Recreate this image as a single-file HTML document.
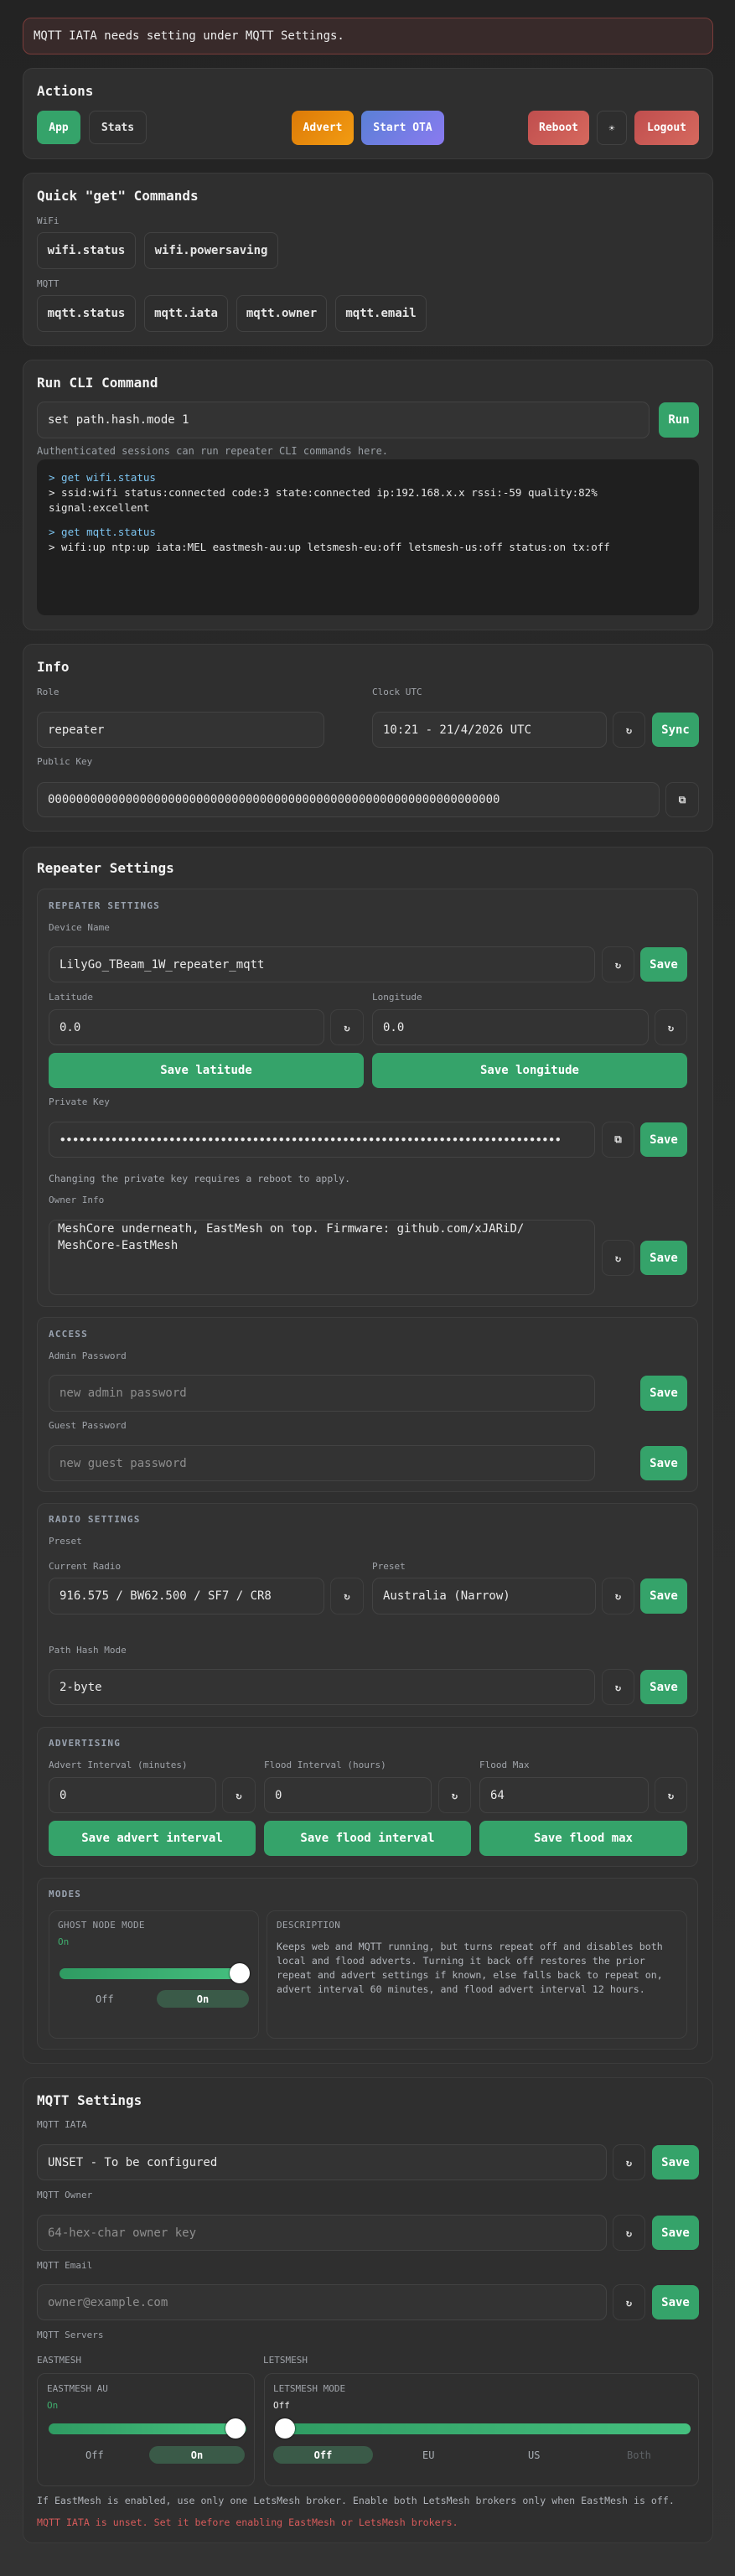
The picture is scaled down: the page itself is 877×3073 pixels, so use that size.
<!DOCTYPE html>
<html><head><meta charset="utf-8"><style>
*{box-sizing:border-box;margin:0;padding:0}
html,body{width:877px;height:3073px}
body{background:linear-gradient(#232323,#2c2c2c 50%,#333333);font-family:"DejaVu Sans Mono","Liberation Mono",monospace;color:#e8e8e8;position:relative;overflow:hidden}
div,span{position:absolute}
.c{left:27px;width:824px;background:#2f2f2f;border:1px solid #3b3b3b;border-radius:12px}
.sb{left:44px;width:789px;background:#323232;border:1px solid #3e3e3e;border-radius:10px}
.h{left:44px;font-size:16px;font-weight:bold;color:#f2f2f2;white-space:nowrap;line-height:20px}
.l{font-size:11px;color:#a0a4aa;white-space:nowrap;line-height:14px}
.sh{left:58px;font-size:11px;font-weight:bold;letter-spacing:1.2px;color:#9aa3b0;line-height:14px}
.in{background:#333;border:1px solid #434343;border-radius:9px;display:flex;align-items:center;padding-left:12px;font-size:14px;color:#eaeaea;white-space:nowrap;overflow:hidden}
.ph{color:#8e8e8e}
.b{background:#35a36a;border-radius:8px;display:flex;align-items:center;justify-content:center;font-size:14px;font-weight:bold;color:#fff;white-space:nowrap}
.ib{border:1px solid #3f3f3f;border-radius:9px;display:flex;align-items:center;justify-content:center;font-size:12px;font-weight:bold;color:#ddd}
.q{border:1px solid #424242;border-radius:8px;background:#2e2e2e;display:flex;align-items:center;justify-content:center;font-size:14px;font-weight:bold;color:#e6e6e6}
.t{font-size:12px;color:#b8bcc2;white-space:nowrap;line-height:17px}
.trk{height:13px;border-radius:7px;background:linear-gradient(90deg,#2f9b62,#45c07f)}
.th{width:24px;height:24px;border-radius:50%;background:#fff;box-shadow:0 0 2px #000}
.pill{border-radius:11px;background:#3a5a48;height:21px;display:flex;align-items:center;justify-content:center;font-size:12px;font-weight:bold;color:#fff}
.seg{font-size:12px;color:#aab0b6;height:21px;display:flex;align-items:center}
</style></head><body>

<div style="left:27px;top:21px;width:824px;height:44px;background:#382a2a;border:1px solid #7a3c3a;border-radius:10px"></div>
<div style="left:40px;top:34px;font-size:14px;line-height:18px;color:#eee;white-space:nowrap">MQTT IATA needs setting under MQTT Settings.</div>

<div class="c" style="top:81px;height:109px"></div>
<div class="h" style="top:99px">Actions</div>
<div class="b" style="left:44px;top:132px;width:52px;height:40px;font-size:13px">App</div>
<div class="q" style="left:106px;top:132px;width:69px;height:40px;font-size:13px">Stats</div>
<div class="b" style="left:348px;top:132px;width:74px;height:41px;font-size:13px;background:linear-gradient(135deg,#dc7a08,#f39c12)">Advert</div>
<div class="b" style="left:431px;top:132px;width:99px;height:41px;font-size:13px;background:linear-gradient(135deg,#5a80d6,#8a7af0)">Start OTA</div>
<div class="b" style="left:630px;top:132px;width:73px;height:41px;font-size:13px;background:linear-gradient(135deg,#c04e4e,#d6695e)">Reboot</div>
<div class="q" style="left:712px;top:132px;width:36px;height:41px;font-size:12px">☀</div>
<div class="b" style="left:757px;top:132px;width:77px;height:41px;font-size:13px;background:linear-gradient(135deg,#c04e4e,#d6695e)">Logout</div>

<div class="c" style="top:206px;height:207px"></div>
<div class="h" style="top:224px">Quick "get" Commands</div>
<div class="l" style="left:44px;top:257px">WiFi</div>
<div class="q" style="left:44px;top:277px;width:118px;height:44px">wifi.status</div>
<div class="q" style="left:172px;top:277px;width:160px;height:44px">wifi.powersaving</div>
<div class="l" style="left:44px;top:332px">MQTT</div>
<div class="q" style="left:44px;top:352px;width:118px;height:44px">mqtt.status</div>
<div class="q" style="left:172px;top:352px;width:100px;height:44px">mqtt.iata</div>
<div class="q" style="left:282px;top:352px;width:108px;height:44px">mqtt.owner</div>
<div class="q" style="left:400px;top:352px;width:109px;height:44px">mqtt.email</div>

<div class="c" style="top:429px;height:323px"></div>
<div class="h" style="top:447px">Run CLI Command</div>
<div class="in" style="left:44px;top:479px;width:731px;height:44px">set path.hash.mode 1</div>
<div class="b" style="left:786px;top:480px;width:48px;height:42px">Run</div>
<div class="t" style="left:44px;top:530px;color:#9aa0a6">Authenticated sessions can run repeater CLI commands here.</div>
<div style="left:44px;top:548px;width:790px;height:186px;background:#1f1f1f;border-radius:10px"></div>
<div style="left:58px;top:561px;font-size:12.5px;line-height:18px;white-space:nowrap;color:#e6e6e6"><span style="position:static;color:#7cc4f0">&gt; get wifi.status</span><br>&gt; ssid:wifi status:connected code:3 state:connected ip:192.168.x.x rssi:-59 quality:82%<br>signal:excellent</div>
<div style="left:58px;top:626px;font-size:12.5px;line-height:18px;white-space:nowrap;color:#e6e6e6"><span style="position:static;color:#7cc4f0">&gt; get mqtt.status</span><br>&gt; wifi:up ntp:up iata:MEL eastmesh-au:up letsmesh-eu:off letsmesh-us:off status:on tx:off</div>

<div class="c" style="top:768px;height:224px"></div>
<div class="h" style="top:786px">Info</div>
<div class="l" style="left:44px;top:819px">Role</div>
<div class="l" style="left:444px;top:819px">Clock UTC</div>
<div class="in" style="left:44px;top:849px;width:343px;height:43px">repeater</div>
<div class="in" style="left:444px;top:849px;width:280px;height:43px">10:21 - 21/4/2026 UTC</div>
<div class="ib" style="left:731px;top:849px;width:39px;height:43px">↻</div>
<div class="b" style="left:778px;top:850px;width:56px;height:41px">Sync</div>
<div class="l" style="left:44px;top:902px">Public Key</div>
<div class="in" style="left:44px;top:933px;width:743px;height:42px">0000000000000000000000000000000000000000000000000000000000000000</div>
<div class="ib" style="left:794px;top:933px;width:40px;height:42px">⧉</div>

<div class="c" style="top:1010px;height:1452px"></div>
<div class="h" style="top:1026px">Repeater Settings</div>

<div class="sb" style="top:1060px;height:499px"></div>
<div class="sh" style="top:1074px">REPEATER SETTINGS</div>
<div class="l" style="left:58px;top:1100px">Device Name</div>
<div class="in" style="left:58px;top:1129px;width:652px;height:43px">LilyGo_TBeam_1W_repeater_mqtt</div>
<div class="ib" style="left:718px;top:1129px;width:39px;height:43px">↻</div>
<div class="b" style="left:764px;top:1130px;width:56px;height:41px">Save</div>
<div class="l" style="left:58px;top:1183px">Latitude</div>
<div class="l" style="left:444px;top:1183px">Longitude</div>
<div class="in" style="left:58px;top:1204px;width:329px;height:43px">0.0</div>
<div class="ib" style="left:394px;top:1204px;width:40px;height:43px">↻</div>
<div class="in" style="left:444px;top:1204px;width:330px;height:43px">0.0</div>
<div class="ib" style="left:781px;top:1204px;width:39px;height:43px">↻</div>
<div class="b" style="left:58px;top:1256px;width:376px;height:42px">Save latitude</div>
<div class="b" style="left:444px;top:1256px;width:376px;height:42px">Save longitude</div>
<div class="l" style="left:58px;top:1308px">Private Key</div>
<div class="in" style="left:58px;top:1338px;width:652px;height:43px;font-size:12.5px;letter-spacing:0.15px;font-weight:bold">••••••••••••••••••••••••••••••••••••••••••••••••••••••••••••••••••••••••••••••</div>
<div class="ib" style="left:718px;top:1338px;width:39px;height:43px">⧉</div>
<div class="b" style="left:764px;top:1339px;width:56px;height:41px">Save</div>
<div class="t" style="left:58px;top:1398px;font-size:11.5px;color:#a8acb2">Changing the private key requires a reboot to apply.</div>
<div class="l" style="left:58px;top:1425px">Owner Info</div>
<div style="left:58px;top:1455px;width:652px;height:90px;background:#333;border:1px solid #434343;border-radius:9px"></div>
<div style="left:69px;top:1456px;font-size:14px;line-height:20px;white-space:nowrap;color:#eaeaea">MeshCore underneath, EastMesh on top. Firmware: github.com/xJARiD/<br>MeshCore-EastMesh</div>
<div class="ib" style="left:718px;top:1479px;width:39px;height:43px">↻</div>
<div class="b" style="left:764px;top:1480px;width:56px;height:41px">Save</div>

<div class="sb" style="top:1571px;height:209px"></div>
<div class="sh" style="top:1585px">ACCESS</div>
<div class="l" style="left:58px;top:1611px">Admin Password</div>
<div class="in" style="left:58px;top:1640px;width:652px;height:44px"><span class="ph" style="position:static">new admin password</span></div>
<div class="b" style="left:764px;top:1641px;width:56px;height:42px">Save</div>
<div class="l" style="left:58px;top:1694px">Guest Password</div>
<div class="in" style="left:58px;top:1724px;width:652px;height:43px"><span class="ph" style="position:static">new guest password</span></div>
<div class="b" style="left:764px;top:1725px;width:56px;height:41px">Save</div>

<div class="sb" style="top:1793px;height:255px"></div>
<div class="sh" style="top:1806px">RADIO SETTINGS</div>
<div class="l" style="left:58px;top:1832px">Preset</div>
<div class="l" style="left:58px;top:1862px">Current Radio</div>
<div class="l" style="left:444px;top:1862px">Preset</div>
<div class="in" style="left:58px;top:1882px;width:329px;height:44px">916.575 / BW62.500 / SF7 / CR8</div>
<div class="ib" style="left:394px;top:1882px;width:40px;height:44px">↻</div>
<div class="in" style="left:444px;top:1882px;width:267px;height:44px">Australia (Narrow)</div>
<div class="ib" style="left:718px;top:1882px;width:39px;height:44px">↻</div>
<div class="b" style="left:764px;top:1883px;width:56px;height:42px">Save</div>
<div class="l" style="left:58px;top:1962px">Path Hash Mode</div>
<div class="in" style="left:58px;top:1991px;width:652px;height:43px">2-byte</div>
<div class="ib" style="left:718px;top:1991px;width:39px;height:43px">↻</div>
<div class="b" style="left:764px;top:1992px;width:56px;height:41px">Save</div>

<div class="sb" style="top:2060px;height:167px"></div>
<div class="sh" style="top:2073px">ADVERTISING</div>
<div class="l" style="left:58px;top:2099px">Advert Interval (minutes)</div>
<div class="l" style="left:315px;top:2099px">Flood Interval (hours)</div>
<div class="l" style="left:572px;top:2099px">Flood Max</div>
<div class="in" style="left:58px;top:2120px;width:200px;height:43px">0</div>
<div class="ib" style="left:265px;top:2120px;width:40px;height:43px">↻</div>
<div class="in" style="left:315px;top:2120px;width:200px;height:43px">0</div>
<div class="ib" style="left:523px;top:2120px;width:39px;height:43px">↻</div>
<div class="in" style="left:572px;top:2120px;width:202px;height:43px">64</div>
<div class="ib" style="left:781px;top:2120px;width:39px;height:43px">↻</div>
<div class="b" style="left:58px;top:2172px;width:247px;height:42px">Save advert interval</div>
<div class="b" style="left:315px;top:2172px;width:247px;height:42px">Save flood interval</div>
<div class="b" style="left:572px;top:2172px;width:248px;height:42px">Save flood max</div>

<div class="sb" style="top:2240px;height:205px"></div>
<div class="sh" style="top:2253px">MODES</div>
<div style="left:58px;top:2279px;width:251px;height:153px;border:1px solid #3f3f3f;border-radius:10px"></div>
<div class="l" style="left:69px;top:2290px;letter-spacing:0.3px">GHOST NODE MODE</div>
<div class="l" style="left:69px;top:2310px;color:#3fae6e">On</div>
<div class="trk" style="left:71px;top:2348px;width:222px"></div>
<div class="th" style="left:274px;top:2342px"></div>
<div class="seg" style="left:114px;top:2374px">Off</div>
<div class="pill" style="left:187px;top:2374px;width:110px">On</div>
<div style="left:318px;top:2279px;width:502px;height:153px;border:1px solid #3f3f3f;border-radius:10px"></div>
<div class="l" style="left:330px;top:2290px;letter-spacing:0.3px">DESCRIPTION</div>
<div style="left:330px;top:2314px;font-size:11.6px;line-height:17px;color:#b4b8be;white-space:nowrap">Keeps web and MQTT running, but turns repeat off and disables both<br>local and flood adverts. Turning it back off restores the prior<br>repeat and advert settings if known, else falls back to repeat on,<br>advert interval 60 minutes, and flood advert interval 12 hours.</div>

<div class="c" style="top:2478px;height:556px"></div>
<div class="h" style="top:2496px">MQTT Settings</div>
<div class="l" style="left:44px;top:2528px">MQTT IATA</div>
<div class="in" style="left:44px;top:2558px;width:680px;height:43px">UNSET - To be configured</div>
<div class="ib" style="left:731px;top:2558px;width:39px;height:43px">↻</div>
<div class="b" style="left:778px;top:2559px;width:56px;height:41px">Save</div>
<div class="l" style="left:44px;top:2612px">MQTT Owner</div>
<div class="in" style="left:44px;top:2642px;width:680px;height:43px"><span class="ph" style="position:static">64-hex-char owner key</span></div>
<div class="ib" style="left:731px;top:2642px;width:39px;height:43px">↻</div>
<div class="b" style="left:778px;top:2643px;width:56px;height:41px">Save</div>
<div class="l" style="left:44px;top:2696px">MQTT Email</div>
<div class="in" style="left:44px;top:2725px;width:680px;height:43px"><span class="ph" style="position:static">owner@example.com</span></div>
<div class="ib" style="left:731px;top:2725px;width:39px;height:43px">↻</div>
<div class="b" style="left:778px;top:2726px;width:56px;height:41px">Save</div>
<div class="l" style="left:44px;top:2779px">MQTT Servers</div>
<div class="l" style="left:44px;top:2809px">EASTMESH</div>
<div class="l" style="left:314px;top:2809px">LETSMESH</div>
<div style="left:44px;top:2831px;width:260px;height:135px;border:1px solid #3f3f3f;border-radius:10px"></div>
<div class="l" style="left:56px;top:2843px">EASTMESH AU</div>
<div class="l" style="left:56px;top:2863px;color:#3fae6e">On</div>
<div class="trk" style="left:58px;top:2891px;width:236px"></div>
<div class="th" style="left:269px;top:2885px"></div>
<div class="seg" style="left:102px;top:2918px">Off</div>
<div class="pill" style="left:178px;top:2918px;width:114px">On</div>
<div style="left:315px;top:2831px;width:519px;height:135px;border:1px solid #3f3f3f;border-radius:10px"></div>
<div class="l" style="left:326px;top:2843px">LETSMESH MODE</div>
<div class="l" style="left:326px;top:2863px;color:#eee">Off</div>
<div class="trk" style="left:329px;top:2891px;width:495px"></div>
<div class="th" style="left:328px;top:2885px"></div>
<div class="pill" style="left:326px;top:2918px;width:119px">Off</div>
<div class="seg" style="left:504px;top:2918px">EU</div>
<div class="seg" style="left:630px;top:2918px">US</div>
<div class="seg" style="left:748px;top:2918px;color:#5e6266">Both</div>
<div class="t" style="left:44px;top:2975px;font-size:11.6px;color:#b0b4ba">If EastMesh is enabled, use only one LetsMesh broker. Enable both LetsMesh brokers only when EastMesh is off.</div>
<div class="t" style="left:44px;top:3001px;font-size:11.6px;color:#d65a5a">MQTT IATA is unset. Set it before enabling EastMesh or LetsMesh brokers.</div>
</body></html>
